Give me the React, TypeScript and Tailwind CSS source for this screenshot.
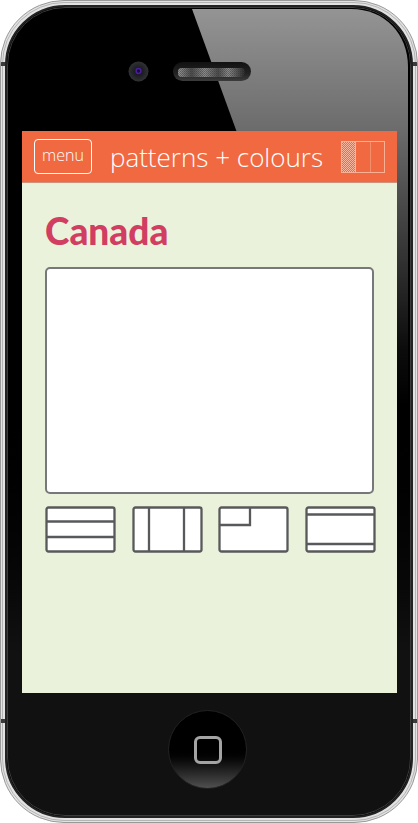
import type { ReactNode } from "react";

function Speaker() {
  return (
    <svg className="absolute top-[60px] left-[171px]" width="80" height="21" viewBox="0 0 80 21" aria-hidden="true">
      <defs>
        <linearGradient id="slot" x1="0" y1="0" x2="0" y2="1">
          <stop offset="0" stopColor="#111" />
          <stop offset="0.6" stopColor="#222" />
          <stop offset="1" stopColor="#3c3c3c" />
        </linearGradient>
        <linearGradient id="mesh" x1="0" y1="0" x2="1" y2="0">
          <stop offset="0" stopColor="#999" />
          <stop offset="0.2" stopColor="#4a4a4a" />
          <stop offset="0.4" stopColor="#8c8c8c" />
          <stop offset="0.6" stopColor="#4a4a4a" />
          <stop offset="0.75" stopColor="#8c8c8c" />
          <stop offset="1" stopColor="#222" />
        </linearGradient>
        <pattern id="dots" width="2" height="2" patternUnits="userSpaceOnUse">
          <rect width="1" height="1" fill="#333" />
          <rect x="1" y="1" width="1" height="1" fill="#444" />
        </pattern>
      </defs>
      <rect x="1" y="1" width="78" height="19" rx="9.500" fill="url(#slot)" />
      <rect x="6" y="7" width="67" height="9" rx="4" fill="url(#mesh)" />
      <rect x="6" y="7" width="67" height="9" rx="4" fill="url(#dots)" opacity="0.5" />
    </svg>
  );
}

function Camera() {
  return (
    <svg className="absolute top-[60px] left-[127px]" width="21" height="21" viewBox="0 0 21 21" aria-hidden="true">
      <defs>
        <radialGradient id="lens">
          <stop offset="0" stopColor="#100c20" />
          <stop offset="0.5" stopColor="#202124" />
          <stop offset="1" stopColor="#303234" />
        </radialGradient>
      </defs>
      <circle cx="10.500" cy="10.500" r="10" fill="url(#lens)" />
      <circle cx="10.500" cy="10" r="2.400" fill="#140d35" stroke="#4a1f9c" strokeWidth="1.500" />
    </svg>
  );
}

function FlagIcon() {
  return (
    <svg width="44" height="32" viewBox="0 0 44 32" fill="none" aria-hidden="true">
      <defs>
        <pattern id="weave" width="2" height="2" patternUnits="userSpaceOnUse">
          <rect width="1" height="1" fill="#fbd0bd" />
          <rect x="1" y="1" width="1" height="1" fill="#fbd0bd" />
        </pattern>
      </defs>
      <rect x="0" y="0" width="15" height="32" fill="url(#weave)" opacity="0.75" />
      <rect x="0.500" y="0.500" width="43" height="31" stroke="#f9b095" />
      <path d="M14.500 1v30" stroke="#f9b095" />
      <path d="M29.500 1v30" stroke="#f48d69" />
    </svg>
  );
}

function Pattern({ label, children }: { label: string; children: ReactNode }) {
  return (
    <button type="button" aria-label={label} className="block h-[47px] w-[71px]">
      <svg className="block h-full w-full" viewBox="0 0 71 47" fill="none" stroke="#58595b" strokeWidth="2.300" aria-hidden="true">
        <rect x="1.500" y="1.500" width="68" height="44" rx="2" fill="#fff" />
        {children}
      </svg>
    </button>
  );
}

export default function App() {
  return (
    <div className="bg-white font-['Open_Sans','Noto_Sans',sans-serif]">
      <div className="relative mx-auto h-[823px] max-w-[418px] overflow-hidden rounded-[64px] border border-[#999] bg-[#e2e2e2]">
        <div className="absolute inset-px rounded-[62px] border border-[#b4b4b4]" />
        <div className="absolute top-[61px] right-0 left-0 h-1 bg-[#3a3a3a]" />
        <div className="absolute top-[718px] right-0 left-0 h-1 bg-[#3a3a3a]" />
        <div className="absolute inset-x-[4px] top-[4px] bottom-[4px] overflow-hidden rounded-[60px] border-2 border-[#222] bg-black">
          <div className="absolute inset-0 rounded-[58px] border border-[#3c3c3c] bg-linear-to-b from-black from-45% to-[#111] to-80%" />
          <svg className="absolute inset-0 h-full w-full" viewBox="0 0 404 809" preserveAspectRatio="none" aria-hidden="true">
            <defs>
              <linearGradient id="gloss" x1="0" y1="0" x2="0" y2="1">
                <stop offset="0" stopColor="#949494" />
                <stop offset="0.300" stopColor="#6c6c6c" />
                <stop offset="0.500" stopColor="#484848" />
                <stop offset="0.850" stopColor="#0c0c0c" />
                <stop offset="1" stopColor="#000" />
              </linearGradient>
            </defs>
            <path d="M185 2H344C378 2 401 27 401 60V400H330Z" fill="url(#gloss)" />
          </svg>
        </div>
        <Camera />
        <Speaker />
        <div className="relative flex h-full flex-col pt-[130px] pr-5 pl-[21px]">
          <main className="h-[562px] bg-[#eaf2db]">
            <header className="flex h-[52px] items-center justify-between border-b border-[#cf937c] bg-[#f06941] px-3 text-white">
              <button type="button" className="h-[35px] w-[58px] rounded-[4px] border border-white pb-1 font-['Open_Sans',sans-serif] text-[16px] leading-[28px] font-light">
                menu
              </button>
              <p className="font-['Open_Sans',sans-serif] text-[26px] leading-[36px] font-light whitespace-nowrap">patterns + colours</p>
              <FlagIcon />
            </header>
            <section className="px-[23px] pt-[24px]">
              <h1 className="font-['Lato','Open_Sans',sans-serif] text-[37px] leading-[48px] font-black text-[#d13e62]">Canada</h1>
              <div className="mt-3 h-[227px] rounded-[5px] border-2 border-[#77787b] bg-white" />
              <div className="-mr-0.5 mt-3 flex justify-between">
                <Pattern label="Horizontal stripes">
                  <path d="M2 15.500H69M2 31H69" />
                </Pattern>
                <Pattern label="Vertical stripes">
                  <path d="M17 2V45M52 2V45" />
                </Pattern>
                <Pattern label="Canton">
                  <path d="M2 19H32V2" />
                </Pattern>
                <Pattern label="Top and bottom bands">
                  <path d="M2 8.500H69M2 38H69" />
                </Pattern>
              </div>
            </section>
          </main>
          <button
            type="button"
            aria-label="Home"
            className="mt-[17px] mr-1 flex size-[79px] items-center justify-center self-center rounded-full border border-[#222] bg-linear-to-b from-black from-45% to-[#505050]"
          >
            <span className="size-[28px] rounded-[6px] border-[3px] border-[#a4a4a4]" />
          </button>
        </div>
      </div>
    </div>
  );
}
